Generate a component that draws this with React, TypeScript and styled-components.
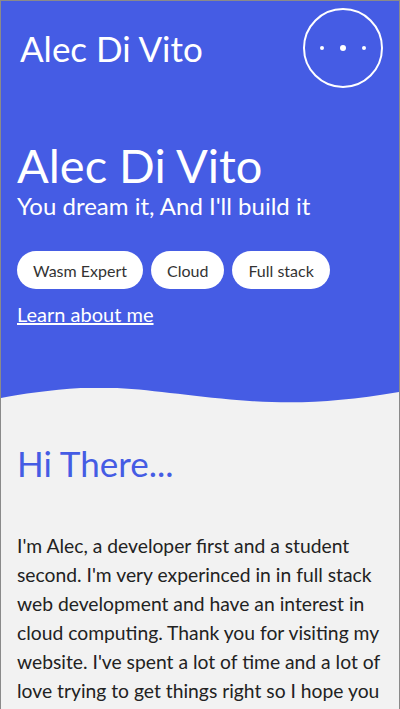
import React from 'react'
import styled, { createGlobalStyle } from 'styled-components'

const BLUE = '#455ce4'

const GlobalStyle = createGlobalStyle`
  html, body {
    margin: 0;
    padding: 0;
    background: #f2f2f2;
  }
  body {
    font-family: 'Lato', 'Noto Sans', sans-serif;
  }
`

const Frame = styled.div`
  box-sizing: border-box;
  width: 400px;
  height: 709px;
  overflow: hidden;
  border: 1px solid #8a8a8a;
  border-bottom: none;
  background: #f2f2f2;
`

const Hero = styled.header`
  background: ${BLUE};
  color: #fff;
  padding: 7px 16px 0 16px;
`

const NavBar = styled.nav`
  display: flex;
  align-items: center;
  justify-content: space-between;
`

const Brand = styled.div`
  font-size: 35px;
  padding-left: 3px;
  font-weight: 400;
`

const MenuButton = styled.button`
  width: 80px;
  height: 80px;
  border-radius: 50%;
  border: 2px solid #fff;
  background: transparent;
  display: flex;
  align-items: center;
  justify-content: center;
  gap: 16px;
  padding: 0;
`

const Dot = styled.span<{ big?: boolean }>`
  width: ${({ big }) => (big ? 6 : 4)}px;
  height: ${({ big }) => (big ? 6 : 4)}px;
  border-radius: 50%;
  background: #fff;
`

const Intro = styled.div`
  padding-top: 52px;
  padding-bottom: 62px;
`

const Title = styled.h1`
  margin: 0;
  font-size: 47px;
  font-weight: 400;
  line-height: 1.1;
`

const Tagline = styled.p`
  margin: 0;
  font-size: 24px;
  line-height: 1.2;
`

const Chips = styled.div`
  display: flex;
  gap: 8px;
  margin-top: 31px;
`

const Chip = styled.span`
  background: #fff;
  color: #333;
  border-radius: 20px;
  padding: 0 16px;
  height: 38px;
  display: flex;
  align-items: center;
  font-size: 16px;
`

const LearnLink = styled.a`
  display: inline-block;
  margin-top: 13px;
  color: #fff;
  font-size: 20px;
  text-decoration: underline;
`

const Wave = styled.svg`
  display: block;
  width: 100%;
  height: 30px;
`

const About = styled.section`
  padding: 24px 12px 0 16px;
`

const Heading = styled.h2`
  margin: 0;
  color: ${BLUE};
  font-size: 35px;
  font-weight: 400;
`

const Body = styled.p`
  margin: 47px 0 0 0;
  color: #222;
  font-size: 19.3px;
  line-height: 29px;
`

export default function App() {
  return (
    <Frame>
      <GlobalStyle />
      <Hero>
        <NavBar>
          <Brand>Alec Di Vito</Brand>
          <MenuButton aria-label="menu">
            <Dot />
            <Dot big />
            <Dot />
          </MenuButton>
        </NavBar>
        <Intro>
          <Title>Alec Di Vito</Title>
          <Tagline>You dream it, And I'll build it</Tagline>
          <Chips>
            <Chip>Wasm Expert</Chip>
            <Chip>Cloud</Chip>
            <Chip>Full stack</Chip>
          </Chips>
          <LearnLink href="#about">Learn about me</LearnLink>
        </Intro>
      </Hero>
      <Wave viewBox="0 0 400 30" preserveAspectRatio="none">
        <rect x="0" y="0" width="400" height="30" fill="#f2f2f2" />
        <path d="M0 0 H400 V4 C340 14 300 16 250 13 C180 8 130 -3 80 0 C50 2 20 6 0 10 Z" fill={BLUE} />
      </Wave>
      <About id="about">
        <Heading>Hi There...</Heading>
        <Body>
          I'm Alec, a developer first and a student second. I'm very experinced in in full stack web
          development and have an interest in cloud computing. Thank you for visiting my website. I've
          spent a lot of time and a lot of love trying to get things right so I hope you enjoy it.
        </Body>
      </About>
    </Frame>
  )
}
